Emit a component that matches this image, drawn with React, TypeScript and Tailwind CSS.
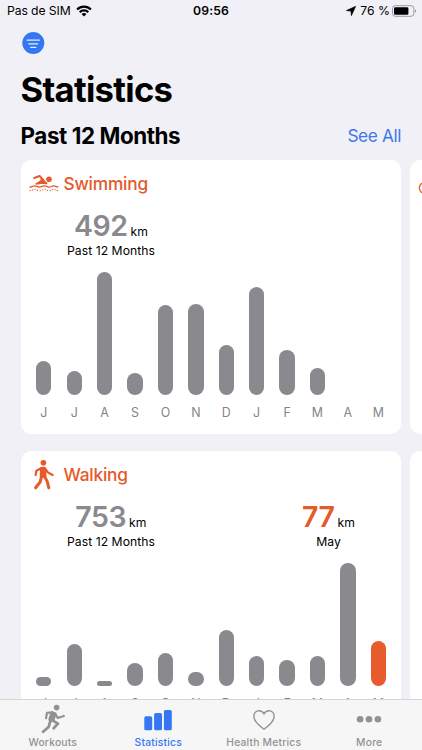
import React from 'react';

const MONTHS = ['J', 'J', 'A', 'S', 'O', 'N', 'D', 'J', 'F', 'M', 'A', 'M'];

const SwimIcon = () => (
  <svg width="30" height="20" viewBox="0 0 30 20" fill="none" stroke="currentColor" strokeLinecap="round" strokeLinejoin="round">
    <circle cx="20" cy="5.2" r="2.8" fill="currentColor" stroke="none" />
    <path d="M5.2 4 10.6 2 14 5.6" strokeWidth="2" />
    <path d="M12.4 4.6 17.6 9.4 12.6 9 7.2 9.9 12.4 6.6Z" fill="currentColor" strokeWidth="1.7" />
    <path d="M1 13C3.2 13 3.6 11.8 5.5 11.8S8 13.1 10.4 13.1 13.2 11.8 15.2 11.8 17.8 13.1 20 13.1 22.6 11.9 24.6 11.9 26.8 12.9 29 12.9" strokeWidth="1.3" />
    <path d="M1 16.6C3.2 16.6 3.6 15.3 5.5 15.3S8 16.8 10.4 16.8 13.2 15.3 15.2 15.3 17.8 16.8 20 16.8 22.6 15.4 24.6 15.4 26.8 16.6 29 16.6" strokeWidth="1.2" strokeDasharray="0.1 2.5" />
  </svg>
);

const WalkIcon = () => (
  <svg width="30" height="32" viewBox="0 0 30 32" fill="none" stroke="currentColor" strokeLinecap="round" strokeLinejoin="round">
    <circle cx="14.4" cy="3.8" r="2.8" fill="currentColor" stroke="none" />
    <path d="M12.8 9.4H15.2L15.9 17H12.4Z" fill="currentColor" strokeWidth="3.4" />
    <path d="M12 9.2 7.4 11.7 6.6 16" strokeWidth="2.2" />
    <path d="M16.3 9.5 18.8 13.4 23.6 16" strokeWidth="2.2" />
    <path d="M12.4 17.8 11.2 23 6.6 28.8" strokeWidth="3" />
    <path d="M15.6 17.6 18.2 22.4 19.8 28.8" strokeWidth="3" />
  </svg>
);

const RunIcon = () => (
  <svg width="30" height="32" viewBox="0 0 30 32" fill="none" stroke="currentColor" strokeLinecap="round" strokeLinejoin="round">
    <circle cx="18.6" cy="3.6" r="2.8" fill="currentColor" stroke="none" />
    <path d="M13.8 8.8 17 9.8 15 16.4 11.8 15.6Z" fill="currentColor" strokeWidth="3" />
    <path d="M14 8.4 9 8.8 8 14.2" strokeWidth="2.2" />
    <path d="M17.6 10.4 19.8 14 25.8 12" strokeWidth="2.2" />
    <path d="M12.4 17 10.6 23 5.1 27.8" strokeWidth="2.8" />
    <path d="M14.4 16.4 20 19.6 15.6 24.2" strokeWidth="2.8" />
  </svg>
);

const BarsIcon = () => (
  <svg width="30" height="32" viewBox="0 0 30 32" fill="currentColor">
    <rect x="1.3" y="12.3" width="7.9" height="14" rx="1.6" />
    <rect x="11.1" y="9" width="7.9" height="17.3" rx="1.6" />
    <rect x="20.9" y="6" width="7.9" height="20.3" rx="1.6" />
  </svg>
);

const HeartIcon = () => (
  <svg width="30" height="32" viewBox="0 0 30 32" fill="none" stroke="currentColor" strokeWidth="1.4" strokeLinejoin="round">
    <path d="M15 25.2C10 21.6 4.9 17.4 4.9 12.4 4.9 9.1 7.2 6.7 10.1 6.7 12.2 6.7 14 7.9 15 9.9 16 7.9 17.8 6.7 19.9 6.7 22.8 6.7 25.1 9.1 25.1 12.4 25.1 17.4 20 21.6 15 25.2Z" />
  </svg>
);

const MoreIcon = () => (
  <svg width="30" height="32" viewBox="0 0 30 32" fill="currentColor">
    <circle cx="6.1" cy="15.2" r="3.3" />
    <circle cx="15" cy="15.2" r="3.3" />
    <circle cx="23.9" cy="15.2" r="3.3" />
  </svg>
);

const StatusBar = () => (
  <div className="grid h-[22px] grid-cols-3 items-center pl-[7px] pr-[5px] text-[12.2px]">
    <div className="flex items-center gap-[5px]">
      <span className="-tracking-[0.1px]">Pas de SIM</span>
      <svg width="16" height="12" viewBox="0 0 16 12" fill="none" stroke="currentColor" strokeWidth="2.2">
        <path d="M1.1 4.5A9.8 9.8 0 0 1 14.9 4.5" />
        <path d="M3.7 7.2A6.1 6.1 0 0 1 12.3 7.2" />
        <path d="M8 11.6 5.5 9.1A3.6 3.6 0 0 1 10.5 9.1Z" fill="currentColor" stroke="none" />
      </svg>
    </div>
    <span className="pr-0.5 text-center font-semibold tracking-[0.2px]">09:56</span>
    <div className="flex items-center justify-end">
      <svg width="10" height="10" viewBox="0 0 10 10" fill="currentColor" className="mr-1">
        <path d="M9.7 0.3 5.4 9.7 4.9 5.1 0.3 4.6Z" stroke="currentColor" strokeWidth="0.6" strokeLinejoin="round" />
      </svg>
      <span className="mr-[2px] whitespace-nowrap">76 %</span>
      <svg width="25" height="12" viewBox="0 0 25 12">
        <rect x="0.5" y="0.7" width="21.4" height="10.6" rx="2.8" fill="none" stroke="#9a9a9e" />
        <rect x="2" y="2.2" width="14.4" height="7.6" rx="1.4" />
        <path d="M23 4.2C24.4 4.8 24.4 7.2 23 7.8Z" fill="#9a9a9e" />
      </svg>
    </div>
  </div>
);

type TotalProps = { value: number; label: string; accent?: boolean; className: string };

const Total = ({ value, label, accent, className }: TotalProps) => (
  <div className={`flex flex-col items-center pt-px ${className}`}>
    <div className="flex h-[34px] items-baseline gap-[3px] leading-[34px]">
      <span
        className={`text-[28.5px] font-semibold tracking-[-0.5px] ${accent ? 'text-[#e5592b]' : 'text-[#8a898e]'}`}
      >
        {value}
      </span>
      <span className="text-[12.2px] tracking-[0.1px]">km</span>
    </div>
    <span className="text-[12.2px] leading-4 tracking-[0.05px] whitespace-nowrap">{label}</span>
  </div>
);

type CardProps = {
  icon: React.ReactNode;
  title: string;
  total: number;
  current?: number;
  bars: number[];
};

const StatCard = ({ icon, title, total, current, bars }: CardProps) => (
  <div className="h-[274px] w-[380.5px] shrink-0 rounded-[10px] bg-white">
    <div className="flex h-12 items-center gap-[4.5px] pl-[8.5px] text-[#e5592b]">
      <div className="flex w-[30px] justify-center">{icon}</div>
      <h3 className="text-[17.3px] font-medium tracking-[-0.2px]">{title}</h3>
    </div>
    <div className="flex h-[63px] justify-between pl-[41px] pr-[35px]">
      <Total value={total} label="Past 12 Months" className="w-[99px]" />
      {current && <Total value={current} label="May" accent className="w-[75px]" />}
    </div>
    <div className="flex h-[124px] items-end justify-between pl-[15.6px] pr-[15px]">
      {bars.map((height, i) => (
        <div
          key={i}
          className={`w-[15.4px] rounded-full ${current && i === bars.length - 1 ? 'bg-[#e85b2c]' : 'bg-[#8a898e]'}`}
          style={{ height }}
        />
      ))}
    </div>
    <div className="mt-[9px] flex justify-between pl-[15.6px] pr-[15px]">
      {MONTHS.map((month, i) => (
        <span key={i} className="w-[15.4px] text-center text-[12.4px] leading-[17px] text-[#858489]">
          {month}
        </span>
      ))}
    </div>
  </div>
);

const NextCard = ({ children }: { children?: React.ReactNode }) => (
  <div className="h-[274px] w-10 shrink-0 rounded-[10px] bg-white pl-2 pt-5 text-[#e5592b]">{children}</div>
);

const tabs = [
  { icon: <RunIcon />, label: 'Workouts' },
  { icon: <BarsIcon />, label: 'Statistics', active: true },
  { icon: <HeartIcon />, label: 'Health Metrics' },
  { icon: <MoreIcon />, label: 'More' }
];

export default function App() {
  return (
    <div className="relative h-[750px] w-[422px] overflow-hidden bg-[#f1f0f6] font-[Inter,sans-serif] text-black">
      <StatusBar />
      <header className="pl-[20.5px] pr-[21px]">
        <svg width="24" height="24" viewBox="0 0 24 24" className="mt-[9px]" fill="none" stroke="#e4ecff" strokeWidth="1.3" strokeLinecap="round">
          <circle cx="12.3" cy="12" r="11" fill="#3577f2" stroke="none" />
          <path d="M6.2 9.2H18.4M7.8 12.8H16.6M9.8 16.4H14.8" />
        </svg>
        <h1 className="mt-[13px] text-[34.6px] leading-[42px] font-bold tracking-[-0.7px]">Statistics</h1>
        <div className="mt-3 flex h-7 items-center justify-between">
          <h2 className="text-[22.4px] font-bold tracking-[-0.42px]">Past 12 Months</h2>
          <span className="text-[17.3px] tracking-[-0.4px] text-[#3b79e8]">See All</span>
        </div>
      </header>
      <main className="mt-2.5 flex flex-col gap-[17px] pl-[20.5px]">
        <div className="flex gap-[9px]">
          <StatCard icon={<SwimIcon />} title="Swimming" total={492} bars={[34.5, 24, 123.5, 22.5, 90, 91.5, 50, 108, 45, 27, 0, 0]} />
          <NextCard>
            <svg width="16" height="16" viewBox="0 0 16 16" fill="none" stroke="currentColor" strokeWidth="1.3">
              <circle cx="7" cy="8" r="5.6" />
            </svg>
          </NextCard>
        </div>
        <div className="flex gap-[9px]">
          <StatCard icon={<WalkIcon />} title="Walking" total={753} current={77} bars={[9, 42, 5.5, 23, 33.5, 14, 56, 30.5, 26, 30, 123.5, 45.5]} />
          <NextCard />
        </div>
      </main>
      <nav className="absolute inset-x-0 bottom-0 grid h-[51px] grid-cols-4 border-t border-[#d5d5d8] bg-[#f6f6f7]">
        {tabs.map((tab) => (
          <div
            key={tab.label}
            className={`flex flex-col items-center ${tab.active ? 'text-[#3577f2]' : 'text-[#929294]'}`}
          >
            <div className="mt-1 h-[31px]">{tab.icon}</div>
            <span className="text-[10.3px] leading-[14px] font-medium tracking-[0.2px]">{tab.label}</span>
          </div>
        ))}
      </nav>
    </div>
  );
}
